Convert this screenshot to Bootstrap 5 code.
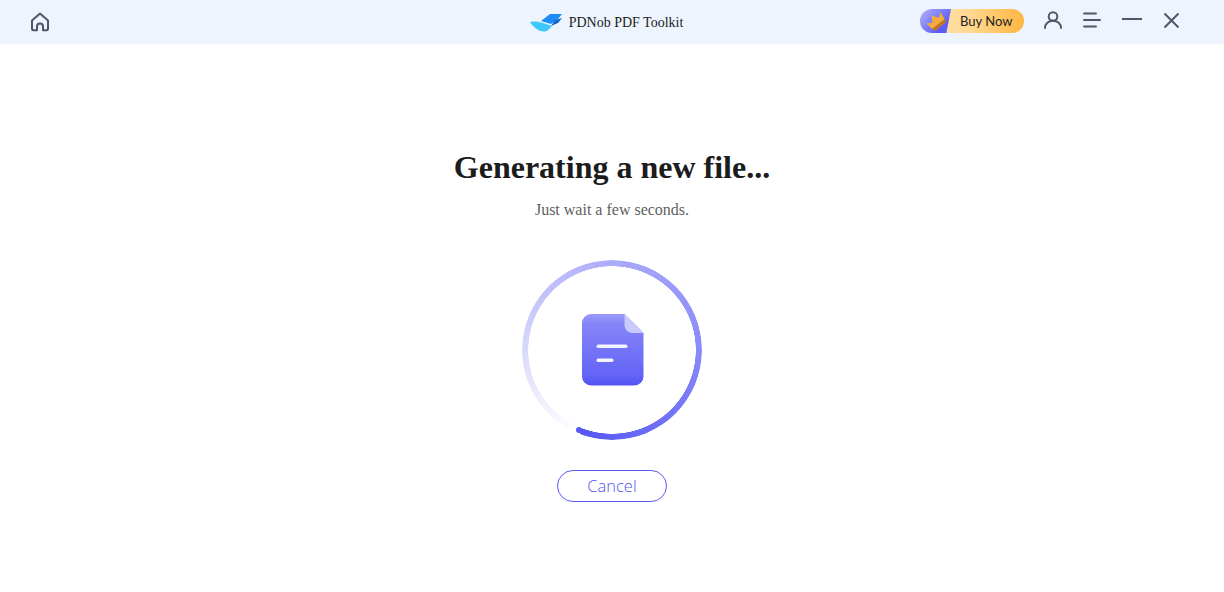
<!DOCTYPE html>
<html lang="en">
<head>
<meta charset="UTF-8">
<meta name="viewport" content="width=device-width, initial-scale=1">
<title>PDNob PDF Toolkit</title>
<link rel="stylesheet" href="https://cdn.jsdelivr.net/npm/bootstrap@5.3.0/dist/css/bootstrap.min.css">
<style>
  html, body { height: 100%; background: #fff; overflow: hidden; }
  .top-bar { height: 44px; background: #edf4fe; padding-left: 30px; padding-right: 44px; }
  .side-slot { flex: 1 1 0; }
  .brand-box { gap: 7px; font: 14px/20px "Liberation Serif", serif; color: #1c1c1c; margin-left: 3px; padding-top: 1px; }
  .buy-pill { width: 104px; height: 24px; border-radius: 12px; overflow: hidden; margin-top: -2px; background: linear-gradient(90deg, #ffe6b8 0%, #ffd78f 50%, #ffb640 100%); font: 13px/24px Lato, sans-serif; color: #222; }
  .buy-tag { width: 31px; height: 24px; background: linear-gradient(135deg, #b4b4fc, #5b5bf6 75%); clip-path: polygon(0 0, 100% 0, 85% 100%, 0 100%); }
  .buy-label { padding-left: 9px; }
  .bar-icons { gap: 21px; margin-left: 20px; margin-top: -4px; }
  .bar-icons svg { display: block; }
  .main-pane { padding-top: 104px; }
  .main-title { font: bold 32px/38px "Liberation Serif", serif; color: #1c1c1c; margin: 0; }
  .main-sub { font: 16px/20px "Liberation Serif", serif; color: #5f5f5f; margin: 14px 0 0; }
  .ring-box { width: 180px; height: 180px; margin-top: 40px; }
  .ring-arc { width: 180px; height: 180px; border-radius: 50%;
    background: conic-gradient(from 203deg, #fff 0deg, #e6e6fd 45deg, #c6c6fb 100deg, #aaaafa 160deg, #8c8cf9 240deg, #6d6df7 310deg, #5757f5 358deg, #fff 358deg);
    -webkit-mask: radial-gradient(circle, transparent 83.5px, #000 84px);
    mask: radial-gradient(circle, transparent 83.5px, #000 84px); }
  .ring-cap { position: absolute; left: 53.5px; top: 166.5px; width: 6px; height: 6px; border-radius: 50%; background: #5757f5; }
  .doc-icon { position: absolute; left: 58px; top: 53px; }
  .cancel-btn { width: 110px; height: 32px; margin-top: 30px; padding: 0; border: 1px solid #5b5bf6; border-radius: 16px; background: #fff; color: #5353f2; font: 300 16.500px/30px "Open Sans", sans-serif; }
</style>
</head>
<body>
  <header class="top-bar d-flex align-items-center">
    <div class="side-slot d-flex align-items-center">
      <svg width="20" height="20" viewBox="0 0 20 20" fill="none" stroke="#4f5666" stroke-width="2" stroke-linejoin="round"><path d="M2 8.500 10 1.500l8 7v8.500a1.200 1.200 0 0 1-1.200 1.200H13v-3.700a3 3 0 0 0-6 0v3.700H3.200A1.200 1.200 0 0 1 2 17z"/></svg>
    </div>
    <div class="brand-box d-flex align-items-center">
      <svg width="32" height="18" viewBox="0 0 32 18"><path d="M11 7 20 0h12l-4 5-7 5z" fill="#1d8cf8"/><path d="M25 6l7-2-4 5-7 3z" fill="#1467c9"/><path d="M0 8c5-1 9 0 13 1 3 1 6 2 9 3-2 2-4 5-7 5.500C9 18 3 13 0 8z" fill="#3cc8fd"/></svg>
      <span>PDNob PDF Toolkit</span>
    </div>
    <div class="side-slot d-flex align-items-center justify-content-end">
      <div class="buy-pill d-flex">
        <div class="buy-tag d-flex align-items-center justify-content-center">
          <svg width="22" height="20" viewBox="0 0 22 20"><g transform="rotate(-38 11 10)"><path d="M3 14 2 6l5 3 4-6 4 6 5-3-1 8z" fill="#f4ab3c"/><path d="M3 14h16l-.5 3h-15z" fill="#c47518"/></g></svg>
        </div>
        <span class="buy-label">Buy Now</span>
      </div>
      <div class="bar-icons d-flex align-items-center">
        <svg width="18" height="18" viewBox="0 0 18 18" fill="none" stroke="#4f5666" stroke-width="2" stroke-linecap="round"><circle cx="9" cy="5.500" r="4.300"/><path d="M1 17c0-4.500 3.500-7.300 8-7.300s8 2.800 8 7.300"/></svg>
        <svg width="18" height="16" viewBox="0 0 18 16" fill="none" stroke="#4f5666" stroke-width="2" stroke-linecap="round"><path d="M1 1.500h12M1 8h16M1 14.500h12"/></svg>
        <svg width="20" height="18" viewBox="0 0 20 18" fill="none" stroke="#4f5666" stroke-width="2"><path d="M0 8h20"/></svg>
        <svg width="17" height="17" viewBox="0 0 17 17" fill="none" stroke="#4f5666" stroke-width="2"><path d="M1.500 1.500l14 14M15.500 1.500l-14 14"/></svg>
      </div>
    </div>
  </header>

  <main class="main-pane d-flex flex-column align-items-center text-center">
    <h1 class="main-title">Generating a new file...</h1>
    <p class="main-sub">Just wait a few seconds.</p>
    <div class="ring-box position-relative">
      <div class="ring-arc"></div>
      <span class="ring-cap"></span>
      <svg class="doc-icon" width="65" height="74" viewBox="0 0 64 74">
        <defs>
          <linearGradient id="docFill" x1="0" y1="0" x2="0" y2="1">
            <stop offset="0" stop-color="#9b9bfa"/>
            <stop offset=".12" stop-color="#8686f8"/>
            <stop offset=".85" stop-color="#6464f7"/>
            <stop offset="1" stop-color="#5353f2"/>
          </linearGradient>
        </defs>
        <path d="M10.500 1H44l19 19v43.500a9 9 0 0 1-9 9H10.500a9 9 0 0 1-9-9V10a9 9 0 0 1 9-9z" fill="url(#docFill)"/>
        <path d="M44 1l19 19H52a8 8 0 0 1-8-8z" fill="#c9c9fb"/>
        <rect x="16" y="31.500" width="31" height="3.500" rx="1.750" fill="#f4f4ff"/>
        <rect x="16" y="45.500" width="17" height="3.500" rx="1.750" fill="#f4f4ff"/>
      </svg>
    </div>
    <button type="button" class="btn cancel-btn">Cancel</button>
  </main>
  <script src="https://cdn.jsdelivr.net/npm/bootstrap@5.3.0/dist/js/bootstrap.bundle.min.js"></script>
</body>
</html>
